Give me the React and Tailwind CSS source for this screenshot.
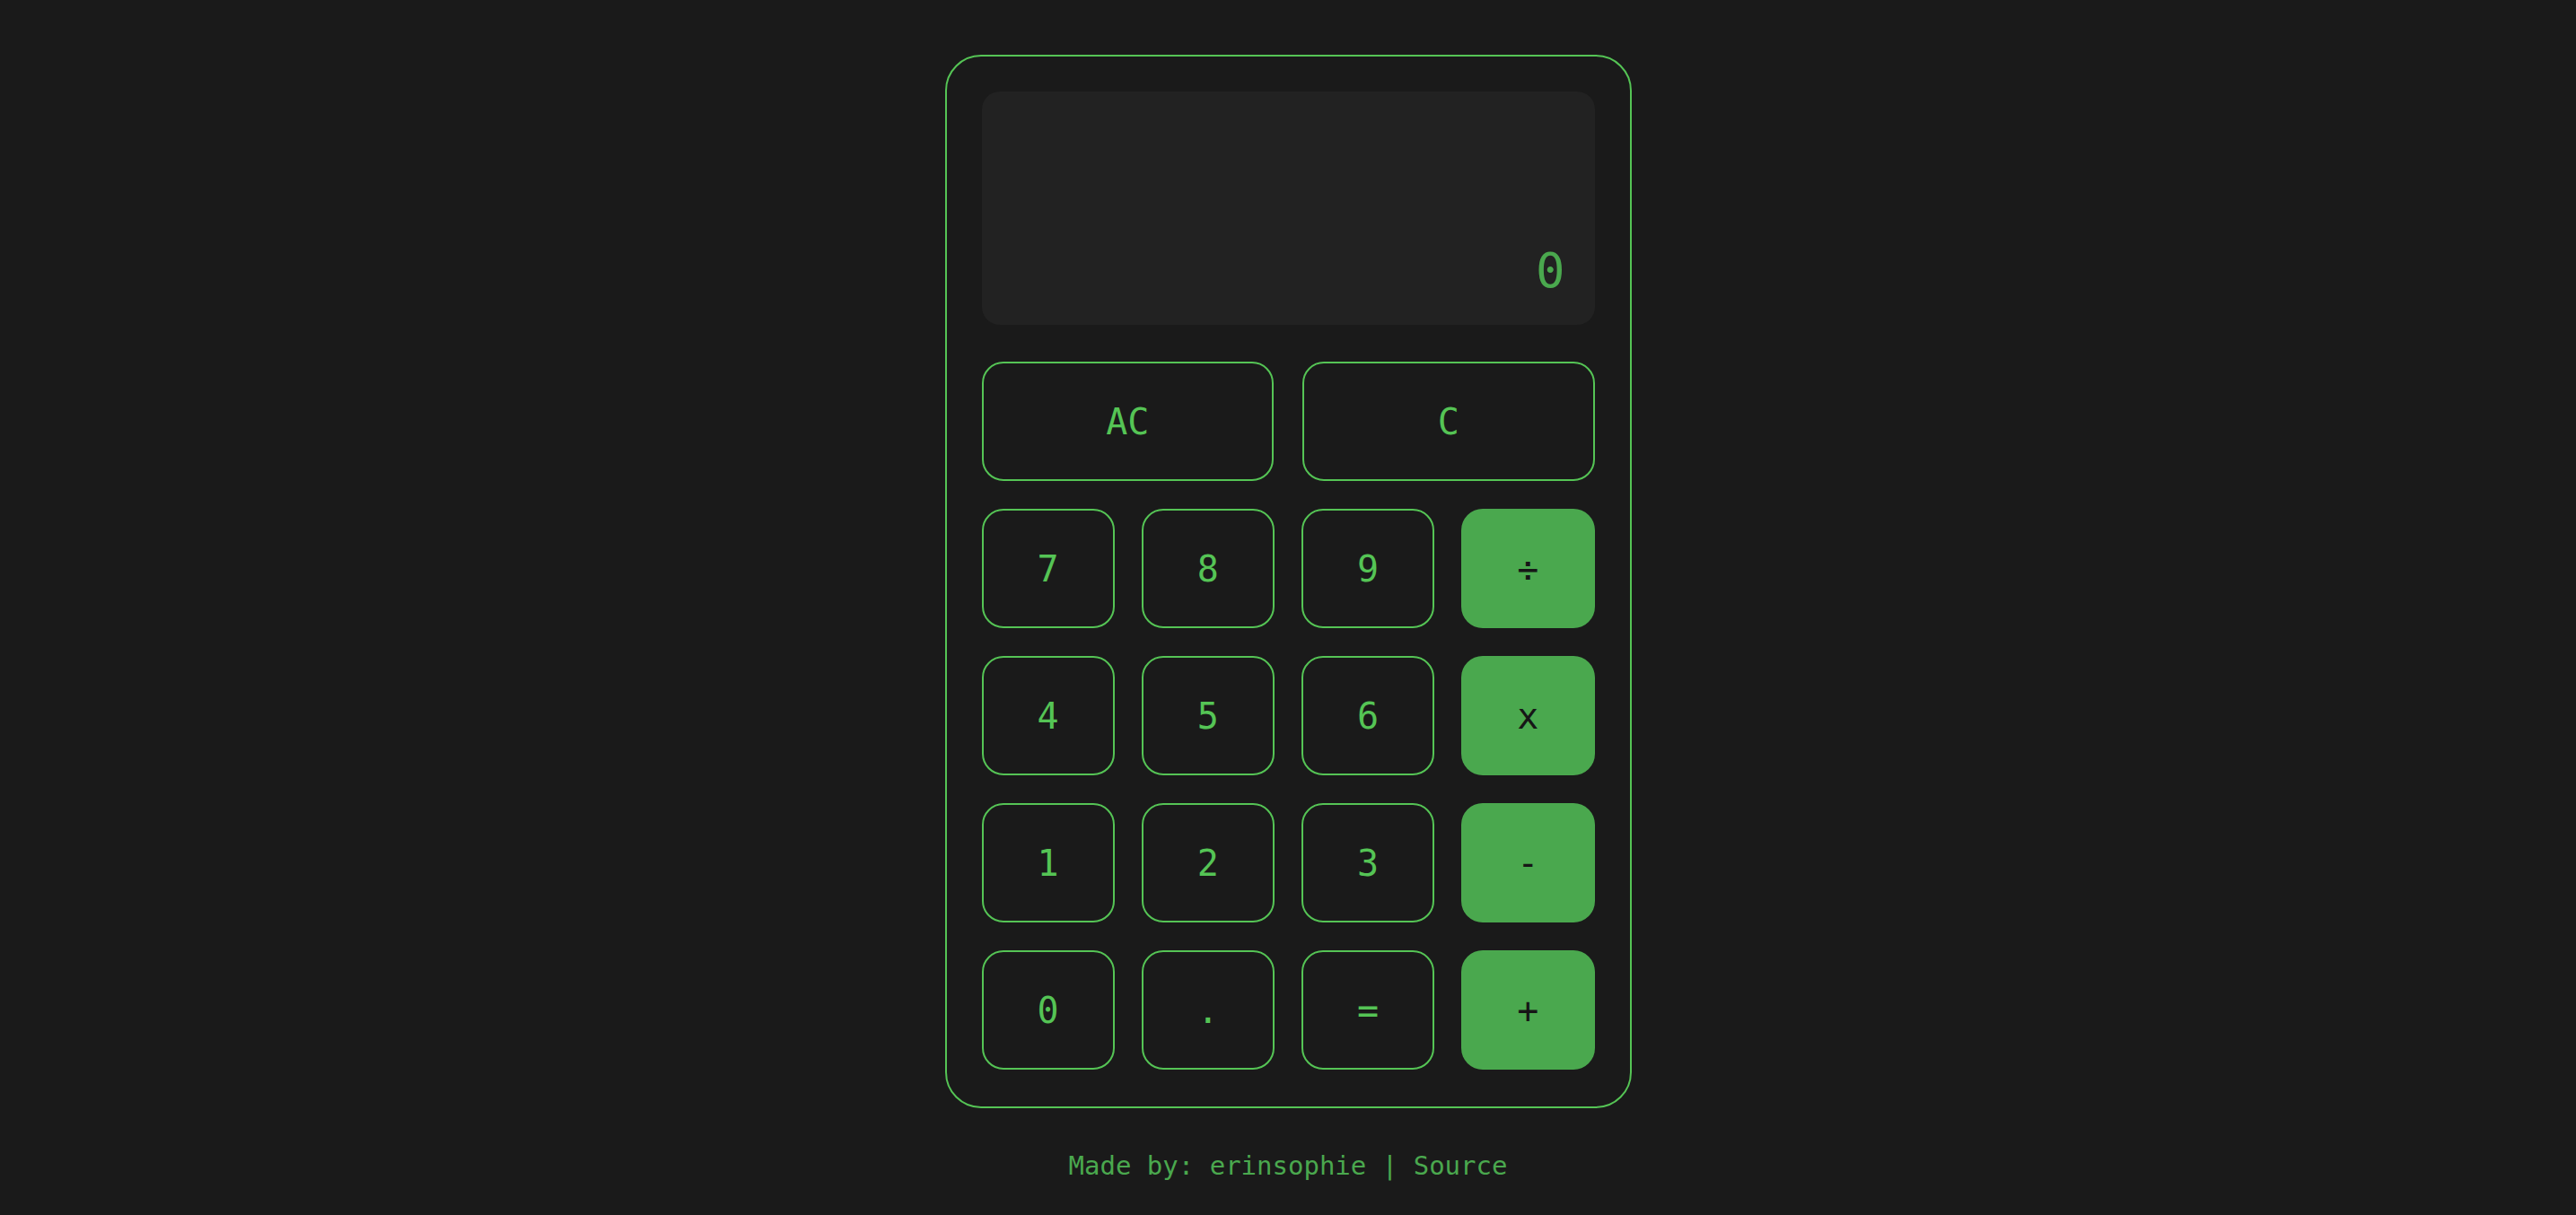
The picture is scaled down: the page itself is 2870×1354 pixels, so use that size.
const KEYS = [
  { label: '7' }, { label: '8' }, { label: '9' }, { label: '÷', op: true },
  { label: '4' }, { label: '5' }, { label: '6' }, { label: 'x', op: true },
  { label: '1' }, { label: '2' }, { label: '3' }, { label: '-', op: true },
  { label: '0' }, { label: '.' }, { label: '=' }, { label: '+', op: true },
];

const mono = "font-['DejaVu_Sans_Mono','Liberation_Mono',monospace]";

function Key({ label, op }) {
  if (op) {
    return (
      <button className="h-[133px] rounded-[24px] bg-[#4aa84e] text-[#161616] text-[40px] leading-none flex items-center justify-center">
        {label}
      </button>
    );
  }
  return (
    <button className="h-[133px] rounded-[24px] border-2 border-[#55c455] text-[#55c455] text-[40px] leading-none flex items-center justify-center">
      {label}
    </button>
  );
}

export default function App() {
  return (
    <div className={`min-h-screen bg-[#1a1a1a] flex flex-col items-center pt-[61px] ${mono}`}>
      <div className="w-[765px] border-2 border-[#55c455] rounded-[40px] px-[39px] pt-[39px] pb-[41px]">
        <div className="h-[260px] rounded-[20px] bg-[#222222] flex items-end justify-end pr-[33px] pb-[33px]">
          <span className="text-[54px] leading-none text-[#4aa84e]">0</span>
        </div>

        <div className="grid grid-cols-2 gap-x-[32px] mt-[41px]">
          <Key label="AC" />
          <Key label="C" />
        </div>

        <div className="grid grid-cols-4 gap-x-[30px] gap-y-[31px] mt-[31px]">
          {KEYS.map((k) => (
            <Key key={k.label} {...k} />
          ))}
        </div>
      </div>

      <p className="mt-[46px] text-[29px] leading-[36px] text-[#4aa84e]">
        Made by: erinsophie | Source
      </p>
    </div>
  );
}
